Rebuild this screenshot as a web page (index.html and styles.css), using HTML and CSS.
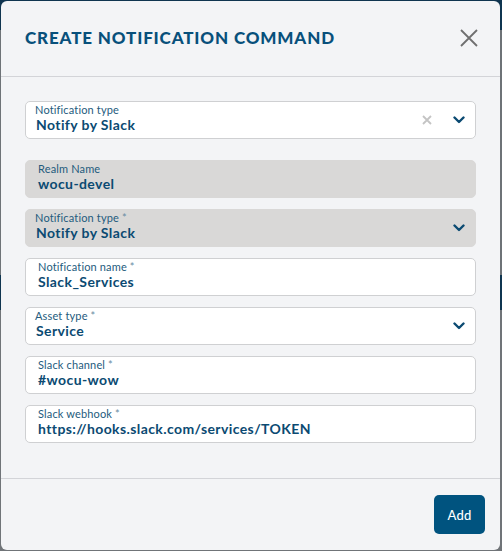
FILE: index.html
```html
<!DOCTYPE html>
<html>
<head>
<meta charset="utf-8">
<link rel="stylesheet" href="styles.css">
</head>
<body>
<div class="backdrop">
  <div class="modal">
    <div class="modal-header">
      <h1 class="title">CREATE NOTIFICATION COMMAND</h1>
      <button class="close" aria-label="Close">
        <svg width="18" height="18" viewBox="0 0 18 18"><path d="M1 1L17 17M17 1L1 17" stroke="#6f6f6f" stroke-width="1.8" fill="none"/></svg>
      </button>
    </div>
    <div class="modal-body">
      <div class="field select first">
        <div class="field-text">
          <div class="label">Notification type</div>
          <div class="value">Notify by Slack</div>
        </div>
        <svg class="clear" width="10" height="10" viewBox="0 0 10 10"><path d="M1 1L9 9M9 1L1 9" stroke="#c4c4c4" stroke-width="1.8" fill="none"/></svg>
        <svg class="chev" width="12" height="8" viewBox="0 0 12 8"><path d="M1.5 1.5L6 6L10.5 1.5" stroke="#0b4a72" stroke-width="2.4" fill="none" stroke-linecap="round" stroke-linejoin="round"/></svg>
      </div>

      <div class="field input disabled">
        <div class="field-text">
          <div class="label">Realm Name</div>
          <div class="value">wocu-devel</div>
        </div>
      </div>

      <div class="field select disabled">
        <div class="field-text">
          <div class="label">Notification type <span class="req">*</span></div>
          <div class="value">Notify by Slack</div>
        </div>
        <svg class="chev" width="12" height="8" viewBox="0 0 12 8"><path d="M1.5 1.5L6 6L10.5 1.5" stroke="#0b4a72" stroke-width="2.4" fill="none" stroke-linecap="round" stroke-linejoin="round"/></svg>
      </div>

      <div class="field input">
        <div class="field-text">
          <div class="label">Notification name <span class="req">*</span></div>
          <div class="value">Slack_Services</div>
        </div>
      </div>

      <div class="field select">
        <div class="field-text">
          <div class="label">Asset type <span class="req">*</span></div>
          <div class="value">Service</div>
        </div>
        <svg class="chev" width="12" height="8" viewBox="0 0 12 8"><path d="M1.5 1.5L6 6L10.5 1.5" stroke="#0b4a72" stroke-width="2.4" fill="none" stroke-linecap="round" stroke-linejoin="round"/></svg>
      </div>

      <div class="field input">
        <div class="field-text">
          <div class="label">Slack channel <span class="req">*</span></div>
          <div class="value">#wocu-wow</div>
        </div>
      </div>

      <div class="field input">
        <div class="field-text">
          <div class="label">Slack webhook <span class="req">*</span></div>
          <div class="value">https://hooks.slack.com/services/TOKEN</div>
        </div>
      </div>
    </div>
    <div class="modal-footer">
      <button class="btn-add">Add</button>
    </div>
  </div>
</div>
</body>
</html>
```

FILE: styles.css
```css
* { box-sizing: border-box; }
html, body { margin: 0; padding: 0; }
body {
  width: 502px;
  height: 551px;
  overflow: hidden;
  font-family: Lato, "Open Sans", sans-serif;
}
.backdrop {
  width: 502px;
  height: 551px;
  padding: 1px 2px 1px 1px;
  background: linear-gradient(to bottom, #0f3550 0px, #0f3550 30px, #6e7377 30px, #6e7377 275px, #0f3550 275px, #0f3550 310px, #707478 310px);
}
.modal {
  width: 499px;
  height: 549px;
  background: #f3f4f6;
  border-radius: 6px;
  display: flex;
  flex-direction: column;
  overflow: hidden;
}
.modal-header {
  height: 76px;
  flex: none;
  border-bottom: 1px solid #d3d4d8;
  display: flex;
  align-items: center;
  justify-content: space-between;
  padding: 0 22px 3px 24px;
}
.title {
  margin: 0;
  font-family: Lato, sans-serif;
  font-weight: 900;
  font-size: 17px;
  letter-spacing: 0.85px;
  color: #08507b;
}
.close {
  border: 0;
  background: none;
  padding: 0;
  width: 18px;
  height: 18px;
  display: flex;
  margin-top: 2px;
}
.modal-body {
  flex: 1;
  padding: 24px 24px 0 24px;
  display: flex;
  flex-direction: column;
  gap: 11px;
}
.field {
  height: 38px;
  flex: none;
  border: 1px solid #cfd0d2;
  border-radius: 5px;
  background: #fff;
  display: flex;
  align-items: center;
  padding: 0 10px 0 9px;
}
.field.first { margin-bottom: 10px; }
.field.input { padding-left: 12px; }
.field.disabled {
  background: #d9d8d7;
  border-color: #d9d8d7;
}
.field-text {
  flex: 1;
  display: flex;
  flex-direction: column;
  align-self: flex-start;
  padding-top: 1px;
}
.label {
  font-size: 11px;
  line-height: 13px;
  letter-spacing: 0.15px;
  color: #245b7d;
}
.req { color: #6a8ca4; font-size: 11px; }
.value {
  font-size: 14px;
  line-height: 17px;
  font-weight: 700;
  letter-spacing: 0.4px;
  color: #0b4a72;
}
.field.select .value { margin-left: 1px; }
.clear { margin-right: 21px; }
.chev { flex: none; }
.modal-footer {
  height: 72px;
  flex: none;
  border-top: 1px solid #d3d4d8;
  display: flex;
  justify-content: flex-end;
  align-items: flex-start;
  padding: 16px 15px 0 0;
}
.btn-add {
  width: 51px;
  height: 39px;
  border: 0;
  border-radius: 5px;
  background: #00537f;
  color: #fff;
  font-family: Lato, sans-serif;
  font-size: 13px;
  font-weight: 500;
  letter-spacing: 0.3px;
  padding: 0;
}
```
